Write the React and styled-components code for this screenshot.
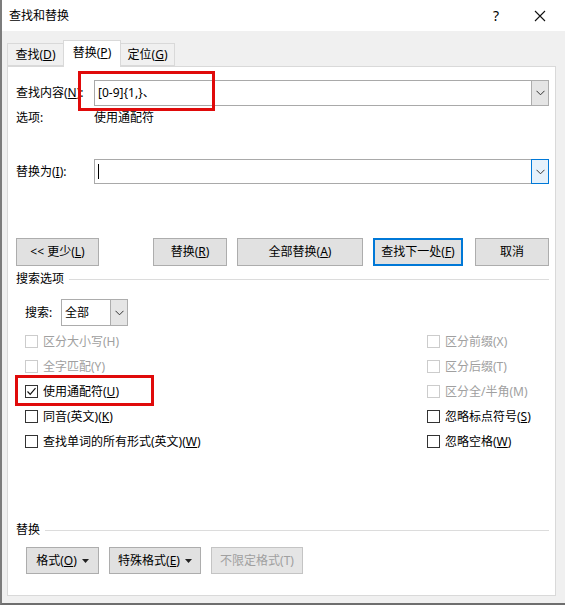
import React from 'react';
import styled, { createGlobalStyle } from 'styled-components';

const Global = createGlobalStyle`
  html, body {
    margin: 0;
    padding: 0;
    background: #fff;
  }
  body {
    font-family: "Noto Sans", "Noto Sans CJK SC", sans-serif;
    font-size: 12px;
    line-height: 16px;
    color: #000;
  }
  * {
    box-sizing: border-box;
  }
`;

const Chevron = () => (
  <svg width="9" height="6" viewBox="0 0 9 6">
    <polyline points="0.5,0.8 4.5,4.8 8.5,0.8" fill="none" stroke="#333" strokeWidth="1" />
  </svg>
);

const Caret = () => (
  <svg width="7" height="4" viewBox="0 0 7 4" style={{ marginLeft: 5 }}>
    <polygon points="0,0 7,0 3.5,4" fill="#222" />
  </svg>
);

const App = () => {
  const options = [
    { left: { text: '区分大小写(H)', disabled: true }, right: { text: '区分前缀(X)', disabled: true } },
    { left: { text: '全字匹配(Y)', disabled: true }, right: { text: '区分后缀(T)', disabled: true } },
    {
      left: { text: <>使用通配符(<u>U</u>)</>, checked: true, marked: true },
      right: { text: '区分全/半角(M)', disabled: true },
    },
    { left: { text: <>同音(英文)(<u>K</u>)</> }, right: { text: <>忽略标点符号(<u>S</u>)</> } },
    { left: { text: <>查找单词的所有形式(英文)(<u>W</u>)</> }, right: { text: <>忽略空格(<u>W</u>)</> } },
  ];

  return (
    <>
      <Global />
      <Window>
        <TitleBar>
          <Title>查找和替换</Title>
          <TitleButton>?</TitleButton>
          <TitleButton>
            <svg width="12" height="12" viewBox="0 0 12 12">
              <path d="M1 1 L11 11 M11 1 L1 11" stroke="#111" strokeWidth="1.1" />
            </svg>
          </TitleButton>
        </TitleBar>

        <Body>
          <TabRow>
            <Tab $w={57}>查找(<u>D</u>)</Tab>
            <Tab $w={58} $active>替换(<u>P</u>)</Tab>
            <Tab $w={55}>定位(<u>G</u>)</Tab>
          </TabRow>

          <Panel>
            <FieldRow $h={26}>
              <Label>查找内容(<u>N</u>):</Label>
              <Combo>
                <ComboText>[0-9]{'{'}1,{'}'}、</ComboText>
                <DropButton><Chevron /></DropButton>
              </Combo>
              <Highlight $left={62} $top={-9} $w={137} $h={40} />
            </FieldRow>

            <InfoRow>
              <Label>选项:</Label>
              <span>使用通配符</span>
            </InfoRow>

            <FieldRow $h={25} $mt={33}>
              <Label>替换为(<u>I</u>):</Label>
              <Combo>
                <ComboText><TextCursor /></ComboText>
                <DropButton $focus><Chevron /></DropButton>
              </Combo>
            </FieldRow>

            <ActionRow>
              <Button $w={83}>&lt;&lt; 更少(<u>L</u>)</Button>
              <ButtonGroup>
                <Button $w={74}>替换(<u>R</u>)</Button>
                <Button $w={126}>全部替换(<u>A</u>)</Button>
                <Button $w={90} $default>查找下一处(<u>F</u>)</Button>
                <Button $w={74} $ml={2}>取消</Button>
              </ButtonGroup>
            </ActionRow>

            <SectionHeader $mt={5}>
              <span>搜索选项</span>
              <Rule />
            </SectionHeader>

            <SearchRow>
              <SearchLabel>搜索:</SearchLabel>
              <Select>
                <ComboText>全部</ComboText>
                <DropButton><Chevron /></DropButton>
              </Select>
            </SearchRow>

            <OptionGrid>
              {options.map((row, i) => (
                <React.Fragment key={i}>
                  {[row.left, row.right].map((o, j) => (
                    <CheckItem key={j} $disabled={o.disabled}>
                      <Box $disabled={o.disabled}>
                        {o.checked && (
                          <svg width="11" height="11" viewBox="0 0 11 11">
                            <polyline points="1.5,5.5 4.2,8.3 9.5,2.2" fill="none" stroke="#111" strokeWidth="1.2" />
                          </svg>
                        )}
                      </Box>
                      <span>{o.text}</span>
                      {o.marked && <Highlight $left={-10} $top={-4} $w={139} $h={31} />}
                    </CheckItem>
                  ))}
                </React.Fragment>
              ))}
            </OptionGrid>

            <SectionHeader $mt={68}>
              <span>替换</span>
              <Rule />
            </SectionHeader>

            <FormatRow>
              <Button $w={73} $h={27}>格式(<u>O</u>)<Caret /></Button>
              <Button $w={92} $h={27}>特殊格式(<u>E</u>)<Caret /></Button>
              <Button $w={92} $h={27} disabled>不限定格式(T)</Button>
            </FormatRow>
          </Panel>
        </Body>
      </Window>
    </>
  );
};

export default App;

const Window = styled.div`
  width: 565px;
  height: 605px;
  display: flex;
  flex-direction: column;
  background: #f0f0f0;
  border-left: 2px solid #7c7c7c;
  border-bottom: 2px solid #6e6e6e;
`;

const TitleBar = styled.div`
  height: 31px;
  flex-shrink: 0;
  display: flex;
  align-items: center;
  padding: 0 3px 0 7px;
  background: #fff;
`;

const Title = styled.div`
  flex: 1;
`;

const TitleButton = styled.div`
  width: 44px;
  height: 31px;
  display: flex;
  align-items: center;
  justify-content: center;
  font-size: 14px;
`;

const Body = styled.div`
  flex: 1;
  display: flex;
  flex-direction: column;
  padding: 9px 9px 7px 5px;
`;

const TabRow = styled.div`
  height: 26px;
  display: flex;
  align-items: flex-end;
  position: relative;
  z-index: 1;
`;

const Tab = styled.div`
  width: ${p => p.$w}px;
  height: ${p => (p.$active ? 27 : 23)}px;
  margin-bottom: ${p => (p.$active ? -1 : 0)}px;
  padding-bottom: ${p => (p.$active ? 3 : 0)}px;
  display: flex;
  align-items: center;
  justify-content: center;
  background: ${p => (p.$active ? '#fff' : '#f0f0f0')};
  border: 1px solid #d9d9d9;
  border-bottom: ${p => (p.$active ? 'none' : '1px solid #d9d9d9')};
  margin-left: -1px;
  &:first-child {
    margin-left: 0;
  }
`;

const Panel = styled.div`
  flex: 1;
  display: flex;
  flex-direction: column;
  background: #fff;
  border: 1px solid #d9d9d9;
  padding: 13px 6px 0 8px;
`;

const FieldRow = styled.div`
  position: relative;
  display: flex;
  align-items: center;
  height: ${p => p.$h}px;
  margin-top: ${p => p.$mt || 0}px;
`;

const Label = styled.span`
  width: 78px;
  flex-shrink: 0;
`;

const Combo = styled.div`
  flex: 1;
  height: 100%;
  display: flex;
  border: 1px solid #a9a9a9;
  background: #fff;
`;

const ComboText = styled.div`
  flex: 1;
  display: flex;
  align-items: center;
  padding-left: 3px;
`;

const TextCursor = styled.span`
  width: 1px;
  height: 15px;
  background: #000;
`;

const DropButton = styled.div`
  width: 18px;
  margin: -1px -1px -1px 0;
  display: flex;
  align-items: center;
  justify-content: center;
  background: ${p => (p.$focus ? '#e5f1fb' : '#e5e5e5')};
  border: 1px solid ${p => (p.$focus ? '#0078d7' : '#adadad')};
`;

const Highlight = styled.div`
  position: absolute;
  left: ${p => p.$left}px;
  top: ${p => p.$top}px;
  width: ${p => p.$w}px;
  height: ${p => p.$h}px;
  border: 3px solid #e00a0a;
  pointer-events: none;
`;

const InfoRow = styled.div`
  display: flex;
  height: 16px;
  margin-top: 4px;
`;

const ActionRow = styled.div`
  display: flex;
  justify-content: space-between;
  margin-top: 54px;
`;

const ButtonGroup = styled.div`
  display: flex;
  gap: 10px;
`;

const Button = styled.button`
  width: ${p => p.$w}px;
  height: ${p => p.$h || 28}px;
  margin-left: ${p => p.$ml || 0}px;
  padding: 0;
  display: flex;
  align-items: center;
  justify-content: center;
  font: inherit;
  color: #000;
  background: #e1e1e1;
  border: ${p => (p.$default ? '2px solid #0078d7' : '1px solid #adadad')};
  &:disabled {
    color: #a0a0a0;
    background: #e5e5e5;
    border-color: #c4c4c4;
  }
`;

const SectionHeader = styled.div`
  display: flex;
  align-items: center;
  height: 16px;
  margin-top: ${p => p.$mt}px;
`;

const Rule = styled.div`
  flex: 1;
  height: 1px;
  margin: 1px 0 0 5px;
  background: #dcdcdc;
`;

const SearchRow = styled.div`
  display: flex;
  align-items: center;
  margin-top: 12px;
  padding-left: 9px;
`;

const SearchLabel = styled.span`
  width: 36px;
`;

const Select = styled.div`
  width: 67px;
  height: 27px;
  display: flex;
  border: 1px solid #acacac;
  background: #fff;
`;

const OptionGrid = styled.div`
  display: grid;
  grid-template-columns: 402px 1fr;
  grid-auto-rows: 25px;
  margin-top: 3px;
  padding-left: 9px;
`;

const CheckItem = styled.div`
  position: relative;
  display: flex;
  align-items: center;
  color: ${p => (p.$disabled ? '#a0a0a0' : '#000')};
`;

const Box = styled.div`
  width: 13px;
  height: 13px;
  margin-right: 5px;
  display: flex;
  align-items: center;
  justify-content: center;
  border: 1px solid ${p => (p.$disabled ? '#cccccc' : '#333')};
  background: #fff;
`;

const FormatRow = styled.div`
  display: flex;
  gap: 10px;
  margin-top: 9px;
  padding-left: 10px;
`;
